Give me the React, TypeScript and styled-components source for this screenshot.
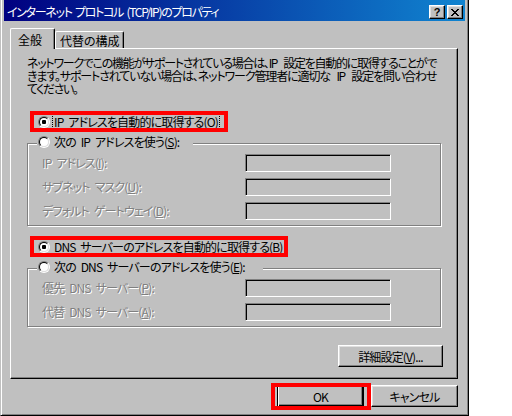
import React from "react";
import styled, { createGlobalStyle, css } from "styled-components";

const FACE = "#c0c0c0";
const SHADOW = "#808080";
const LIGHT = "#dfdfdf";
const FONT = `"Noto Sans CJK JP", "Noto Sans", sans-serif`;

const Global = createGlobalStyle`
  html, body { margin: 0; padding: 0; background: #ffffff; }
  body { font-family: ${FONT}; font-size: 12px; }
`;

const Window = styled.div`
  box-sizing: border-box;
  width: 469px;
  height: 416px;
  background: ${FACE};
  border-left: 1px solid ${FACE};
  border-right: 1px solid #000;
  border-bottom: 1px solid #000;
  box-shadow: inset 1px 0 0 #fff, inset -1px -1px 0 ${SHADOW};
  padding: 0 3px;
  display: flex;
  flex-direction: column;
  font-family: ${FONT};
  font-size: 12px;
  font-feature-settings: "palt";
  letter-spacing: -0.85px;
  word-spacing: 3px;
  color: #000;
`;

const TitleBar = styled.div`
  height: 21px;
  flex: none;
  display: flex;
  align-items: flex-start;
  padding: 5px 2px 0 2px;
  box-sizing: border-box;
  background: linear-gradient(to right, #000080, #1084d0);
  color: #fff;
`;

const TitleText = styled.span`
  flex: 1;
  line-height: 14px;
  white-space: nowrap;
  padding-left: 1px;
  letter-spacing: -1.3px;
  word-spacing: 2px;
`;

const CaptionButton = styled.div<{ $gap?: number }>`
  box-sizing: border-box;
  width: 16px;
  height: 14px;
  margin-left: ${(p) => p.$gap ?? 0}px;
  background: ${FACE};
  border: 1px solid;
  border-color: #fff #000 #000 #fff;
  box-shadow: inset -1px -1px 0 ${SHADOW}, inset 1px 1px 0 ${LIGHT};
  display: flex;
  align-items: center;
  justify-content: center;
  color: #000;
  font-family: "Liberation Sans", Arial, sans-serif;
  font-weight: bold;
  font-size: 11px;
  line-height: 11px;
  letter-spacing: 0;
`;

const TabRow = styled.div`
  flex: none;
  display: flex;
  align-items: flex-end;
  height: 20px;
  margin: 7px 0 0 6px;
  position: relative;
  z-index: 1;
  letter-spacing: 0;
`;

const Tab = styled.div<{ $active?: boolean }>`
  box-sizing: border-box;
  display: flex;
  align-items: center;
  white-space: nowrap;
  background: ${FACE};
  border-top: 1px solid #fff;
  border-left: 1px solid #fff;
  border-right: 1px solid #000;
  box-shadow: inset -1px 0 0 ${SHADOW};
  border-radius: 2px 2px 0 0;
  ${(p) =>
    p.$active
      ? css`
          width: 45px;
          height: 21px;
          margin-bottom: -1px;
          padding-left: 7px;
        `
      : css`
          width: 69px;
          height: 17px;
          padding-left: 4px;
        `}
`;

const Panel = styled.div`
  box-sizing: border-box;
  flex: none;
  width: 448px;
  height: 331px;
  margin-left: 6px;
  border-top: 1px solid #fff;
  border-left: 1px solid #fff;
  border-right: 1px solid #000;
  border-bottom: 1px solid #000;
  box-shadow: inset -1px -1px 0 ${SHADOW};
  padding: 6.5px 0 0 16px;
  display: flex;
  flex-direction: column;
  align-items: flex-start;
`;

const Description = styled.p`
  margin: 0;
  width: 409px;
  line-height: 13px;
  letter-spacing: -1.45px;
  word-spacing: 5px;
`;

const DescLine = styled.span<{ $fill?: boolean }>`
  display: block;
  white-space: nowrap;
  ${(p) =>
    p.$fill &&
    css`
      text-align: justify;
      text-align-last: justify;
    `}
`;

const U = styled.span`
  text-decoration: underline;
  text-underline-offset: 1px;
`;

const Choice = styled.label<{ $top: number; $mark?: number }>`
  position: relative;
  display: flex;
  align-items: center;
  gap: 4px;
  height: 13px;
  margin: ${(p) => p.$top}px 0 0 11px;
  white-space: nowrap;
  ${(p) =>
    p.$mark &&
    css`
      &::after {
        content: "";
        position: absolute;
        top: -4px;
        bottom: -4px;
        left: -8px;
        width: ${p.$mark}px;
        box-sizing: border-box;
        border: 4px solid #ff0000;
        pointer-events: none;
      }
    `}
`;

const ChoiceText = styled.span<{ $focus?: boolean }>`
  line-height: 13px;
  padding: 0 1px;
  margin-left: -1px;
  ${(p) =>
    p.$focus &&
    css`
      outline: 1px dotted #000;
    `}
`;

const RadioMark = styled.span<{ $checked?: boolean }>`
  box-sizing: border-box;
  position: relative;
  flex: none;
  width: 12px;
  height: 12px;
  border-radius: 50%;
  border: 1px solid;
  border-color: ${SHADOW} #fff #fff ${SHADOW};
  &::before {
    content: "";
    position: absolute;
    inset: 0;
    border-radius: 50%;
    border: 1px solid;
    border-color: #000 ${LIGHT} ${LIGHT} #000;
    background: #fff;
  }
  &::after {
    content: "";
    display: ${(p) => (p.$checked ? "block" : "none")};
    position: absolute;
    left: 3px;
    top: 3px;
    width: 4px;
    height: 4px;
    border-radius: 1px;
    background: #000;
  }
`;

const Group = styled.fieldset<{ $top: number }>`
  box-sizing: border-box;
  width: 414px;
  min-inline-size: auto;
  margin: ${(p) => p.$top}px 0 0 0;
  border: 1px solid ${SHADOW};
  box-shadow: inset 1px 1px 0 #fff, 1px 1px 0 #fff;
  padding: 2px 0 5px 9px;
  display: flex;
  flex-direction: column;
  gap: 6px;
`;

const Legend = styled.legend<{ $w: number }>`
  box-sizing: border-box;
  width: ${(p) => p.$w}px;
  height: 17px;
  margin: 0;
  padding: 0 0 4px 1px;
  background: ${FACE};
`;

const LegendInner = styled.span`
  display: flex;
  align-items: center;
  gap: 4px;
  height: 13px;
  white-space: nowrap;
`;

const FieldRow = styled.div`
  display: flex;
  align-items: center;
  height: 18px;
`;

const FieldLabel = styled.span`
  box-sizing: border-box;
  flex: none;
  width: 208px;
  padding-left: 5px;
  color: ${SHADOW};
  text-shadow: 1px 1px 0 #fff;
  white-space: nowrap;
  line-height: 14px;
`;

const Field = styled.input`
  box-sizing: border-box;
  width: 146px;
  height: 18px;
  margin: 0;
  padding: 0;
  appearance: none;
  border: 1px solid;
  border-color: ${SHADOW} #fff #fff ${SHADOW};
  box-shadow: inset 1px 1px 0 #000;
  background: ${FACE};
  font: inherit;
`;

const RightRow = styled.div<{ $top: number; $w?: number; $pr?: number }>`
  display: flex;
  justify-content: flex-end;
  gap: 7px;
  margin-top: ${(p) => p.$top}px;
  ${(p) => p.$w && css`width: ${p.$w}px;`}
  padding-right: ${(p) => p.$pr ?? 0}px;
`;

const Button = styled.button<{ $w: number; $default?: boolean; $mark?: boolean }>`
  box-sizing: border-box;
  position: relative;
  width: ${(p) => p.$w}px;
  height: 22px;
  margin: 0;
  padding: 0;
  font: inherit;
  font-feature-settings: "palt";
  letter-spacing: inherit;
  color: #000;
  background: ${FACE};
  white-space: nowrap;
  ${(p) =>
    p.$default
      ? css`
          border: 1px solid #000;
          box-shadow: inset 1px 1px 0 #fff, inset -1px -1px 0 #000,
            inset -2px -2px 0 ${SHADOW};
        `
      : css`
          border: 1px solid;
          border-color: #fff #000 #000 #fff;
          box-shadow: inset -1px -1px 0 ${SHADOW}, inset 1px 1px 0 ${LIGHT};
        `}
  ${(p) =>
    p.$mark &&
    css`
      &::after {
        content: "";
        position: absolute;
        inset: -3px -8px -4px -7px;
        border: 4px solid #ff0000;
        pointer-events: none;
      }
    `}
`;

const CloseGlyph = () => (
  <svg width="8" height="7" viewBox="0 0 8 7" shapeRendering="crispEdges">
    <path
      d="M0 0h2v1H0zM6 0h2v1H6zM1 1h2v1H1zM5 1h2v1H5zM2 2h4v1H2zM3 3h2v1H3zM2 4h4v1H2zM1 5h2v1H1zM5 5h2v1H5zM0 6h2v1H0zM6 6h2v1H6z"
      fill="#000"
    />
  </svg>
);

export default function App() {
  return (
    <>
      <Global />
      <Window>
        <TitleBar>
          <TitleText>インターネット プロトコル (TCP/IP)のプロパティ</TitleText>
          <CaptionButton>?</CaptionButton>
          <CaptionButton $gap={2}>
            <CloseGlyph />
          </CaptionButton>
        </TitleBar>

        <TabRow>
          <Tab $active>全般</Tab>
          <Tab>代替の構成</Tab>
        </TabRow>

        <Panel>
          <Description>
            <DescLine $fill>
              ネットワークでこの機能がサポートされている場合は、IP 設定を自動的に取得することがで
            </DescLine>
            <DescLine $fill>
              きます。サポートされていない場合は、ネットワーク管理者に適切な IP 設定を問い合わせ
            </DescLine>
            <DescLine>てください。</DescLine>
          </Description>

          <Choice $top={20.5} $mark={198}>
            <RadioMark $checked />
            <ChoiceText $focus>
              IP アドレスを自動的に取得する(<U>O</U>)
            </ChoiceText>
          </Choice>

          <Group $top={7}>
            <Legend $w={156}>
              <LegendInner>
                <RadioMark />
                <span>
                  次の IP アドレスを使う(<U>S</U>):
                </span>
              </LegendInner>
            </Legend>
            <FieldRow>
              <FieldLabel>
                IP アドレス(<U>I</U>):
              </FieldLabel>
              <Field disabled />
            </FieldRow>
            <FieldRow>
              <FieldLabel>
                サブネット マスク(<U>U</U>):
              </FieldLabel>
              <Field disabled />
            </FieldRow>
            <FieldRow>
              <FieldLabel>
                デフォルト ゲートウェイ(<U>D</U>):
              </FieldLabel>
              <Field disabled />
            </FieldRow>
          </Group>

          <Choice $top={14} $mark={258}>
            <RadioMark $checked />
            <ChoiceText>
              DNS サーバーのアドレスを自動的に取得する(<U>B</U>)
            </ChoiceText>
          </Choice>

          <Group $top={7}>
            <Legend $w={226}>
              <LegendInner>
                <RadioMark />
                <span>
                  次の DNS サーバーのアドレスを使う(<U>E</U>):
                </span>
              </LegendInner>
            </Legend>
            <FieldRow>
              <FieldLabel>
                優先 DNS サーバー(<U>P</U>):
              </FieldLabel>
              <Field disabled />
            </FieldRow>
            <FieldRow>
              <FieldLabel>
                代替 DNS サーバー(<U>A</U>):
              </FieldLabel>
              <Field disabled />
            </FieldRow>
          </Group>

          <RightRow $top={18} $w={416}>
            <Button $w={105}>
              詳細設定(<U>V</U>)...
            </Button>
          </RightRow>
        </Panel>

        <RightRow $top={6} $pr={7}>
          <Button $w={87} $default $mark>
            OK
          </Button>
          <Button $w={87}>キャンセル</Button>
        </RightRow>
      </Window>
    </>
  );
}
